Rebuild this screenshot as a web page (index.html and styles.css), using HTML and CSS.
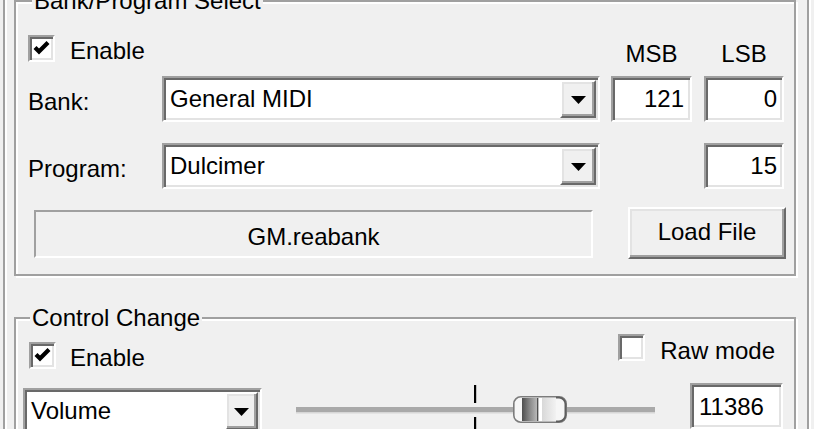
FILE: index.html
```html
<!DOCTYPE html>
<html>
<head>
<meta charset="utf-8">
<title>Bank/Program Select</title>
<link rel="stylesheet" href="styles.css">
</head>
<body>
<div class="frame">
  <section class="group g1">
    <div class="legend">Bank/Program Select</div>
    <div class="row r-enable">
      <span class="check sunken"><svg viewBox="0 0 19 19" width="19" height="19"><polyline points="3,8.5 7,12.5 16,3.5" fill="none" stroke="#000" stroke-width="4.2"/></svg></span>
      <span class="check-label">Enable</span>
      <span class="col-head msb-head">MSB</span>
      <span class="col-head lsb-head">LSB</span>
    </div>
    <div class="row r-field">
      <span class="label">Bank:</span>
      <div class="combo sunken wide"><span class="combo-text">General MIDI</span><span class="drop raised"><svg viewBox="0 0 15 8" width="15" height="8"><polygon points="0,0 15,0 7.5,8" fill="#000"/></svg></span></div>
      <div class="edit sunken num msb-edit">121</div>
      <div class="edit sunken num lsb-edit">0</div>
    </div>
    <div class="row r-field r-program">
      <span class="label">Program:</span>
      <div class="combo sunken wide"><span class="combo-text">Dulcimer</span><span class="drop raised"><svg viewBox="0 0 15 8" width="15" height="8"><polygon points="0,0 15,0 7.5,8" fill="#000"/></svg></span></div>
      <div class="edit sunken num prog-edit">15</div>
    </div>
    <div class="row r-file">
      <div class="static">GM.reabank</div>
      <div class="button raised">Load File</div>
    </div>
  </section>

  <section class="group g2">
    <div class="legend">Control Change</div>
    <div class="row r-cc">
      <span class="check sunken cc-check"><svg viewBox="0 0 19 19" width="19" height="19"><polyline points="3,8.5 7,12.5 16,3.5" fill="none" stroke="#000" stroke-width="4.2"/></svg></span>
      <span class="check-label cc-label">Enable</span>
      <span class="check sunken raw-check"></span>
      <span class="check-label raw-label">Raw mode</span>
    </div>
    <div class="row r-ctrl">
      <div class="combo sunken small"><span class="combo-text">Volume</span><span class="drop raised"><svg viewBox="0 0 15 8" width="15" height="8"><polygon points="0,0 15,0 7.5,8" fill="#000"/></svg></span></div>
      <svg class="slider" viewBox="0 0 370 46" width="370" height="46">
        <defs>
          <linearGradient id="tg" x1="0" x2="1" y1="0" y2="0">
            <stop offset="0" stop-color="#4e4e4e"/>
            <stop offset="0.55" stop-color="#8c8c8c"/>
            <stop offset="1" stop-color="#b8b8b8"/>
          </linearGradient>
          <linearGradient id="tl" x1="0" x2="1" y1="0" y2="0">
            <stop offset="0" stop-color="#d8d8d8"/>
            <stop offset="1" stop-color="#f2f2f2"/>
          </linearGradient>
        </defs>
        <rect x="6" y="24" width="359" height="5" fill="#a9a9a9"/>
        <rect x="6" y="29" width="359" height="1.5" fill="#d6d6d6"/>
        <rect x="184" y="2" width="2.2" height="18" fill="#000"/>
        <rect x="184" y="34" width="2.2" height="14" fill="#000"/>
        <rect x="223.8" y="13.8" width="52.4" height="25.4" rx="7" fill="#f6f6f6" stroke="#7c7c7c" stroke-width="1.6"/>
        <rect x="232" y="15" width="15" height="23" fill="url(#tg)"/>
        <rect x="247" y="15" width="1.6" height="23" fill="#505050"/>
        <rect x="248.6" y="15" width="3.4" height="23" fill="#ffffff"/>
        <rect x="252" y="15" width="14" height="23" fill="url(#tl)"/>
        <path d="M266 14.6 h3 a6.5 6.5 0 0 1 6.4 6.5 v10.8 a6.5 6.5 0 0 1 -6.4 6.5 h-3" fill="none" stroke="#5e5e5e" stroke-width="1.8"/>
      </svg>
      <div class="edit sunken value-edit">11386</div>
    </div>
  </section>
</div>
</body>
</html>
```

FILE: styles.css
```css
* { box-sizing: border-box; }

html, body {
  margin: 0;
  padding: 0;
}

body {
  width: 814px;
  height: 429px;
  overflow: hidden;
  background: #f0f0f0;
  font-family: "Liberation Sans", Arial, sans-serif;
  font-size: 24px;
  line-height: 28px;
  color: #000;
}

.frame {
  margin: 0 5px 0 3px;
  height: 429px;
  border-left: 2px solid #a0a0a0;
  border-right: 2px solid #a0a0a0;
  box-shadow: inset 2px 0 0 #ffffff, 2px 0 0 #ffffff;
  padding: 0 11px 0 9px;
}

/* etched group box */
.group {
  position: relative;
  border: 2px solid #a0a0a0;
  box-shadow: inset 2px 2px 0 #ffffff, 2px 2px 0 #ffffff;
}

.legend {
  position: absolute;
  top: -15px;
  left: 16px;
  padding: 0 2px;
  background: #f0f0f0;
  white-space: nowrap;
}

.g2 .legend { left: 14px; }

.g1 { padding-bottom: 15px; }
.g2 { margin-top: 41px; height: 200px; }

.row {
  display: flex;
  align-items: flex-start;
  white-space: nowrap;
}

/* 3D edges */
.sunken {
  border: 2px solid;
  border-color: #a0a0a0 #ffffff #ffffff #a0a0a0;
  box-shadow: inset 2px 2px 0 #696969, inset -2px -2px 0 #e3e3e3;
  background: #ffffff;
}

.raised {
  border: 2px solid;
  border-color: #ffffff #696969 #696969 #ffffff;
  box-shadow: inset -2px -2px 0 #a0a0a0, inset 2px 2px 0 #e3e3e3;
  background: #f0f0f0;
}

/* checkboxes */
.check {
  flex: none;
  width: 27px;
  height: 27px;
  padding: 2px;
  display: flex;
}

.check svg { display: block; flex: none; }

.check-label { flex: none; }

/* Group 1 */
.r-enable {
  margin-top: 32px;
  height: 42px;
  padding-left: 12px;
}

.r-enable .check { margin-top: 1px; }
.r-enable .check-label { margin-left: 15px; margin-top: 3px; }

.col-head {
  text-align: center;
  margin-top: 6px;
}

.msb-head { margin-left: auto; width: 81px; }
.lsb-head { margin-left: 12px; width: 80px; margin-right: 10px; }

.r-field {
  height: 46px;
  padding-left: 12px;
}

.r-program { margin-top: 21px; }

.label {
  width: 134px;
  flex: none;
  margin-top: 12px;
}

.combo {
  flex: none;
  height: 46px;
  padding: 2px 2px 2px 6px;
  display: flex;
  align-items: center;
}

.combo.wide { width: 438px; }

.combo-text { flex: 1; padding-bottom: 1px; }

.drop {
  flex: none;
  width: 36px;
  height: 38px;
  display: flex;
  align-items: center;
  justify-content: center;
}

.drop svg { display: block; margin-top: 1px; }

.edit {
  flex: none;
  height: 46px;
  padding: 0 6px;
  display: flex;
  align-items: center;
}

.num { justify-content: flex-end; }

.msb-edit { width: 81px; margin-left: 11px; }
.lsb-edit { width: 80px; margin-left: 12px; padding-right: 5px; }
.prog-edit { width: 80px; margin-left: 104px; padding-right: 5px; }

.r-file {
  margin-top: 18px;
  height: 52px;
  padding-left: 18px;
}

.static {
  flex: none;
  width: 559px;
  height: 48px;
  margin-top: 3px;
  border: 2px solid;
  border-color: #a0a0a0 #ffffff #ffffff #a0a0a0;
  display: flex;
  align-items: center;
  justify-content: center;
  padding-top: 5px;
}

.button {
  flex: none;
  width: 158px;
  height: 52px;
  margin-left: 35px;
  display: flex;
  align-items: center;
  justify-content: center;
  padding-bottom: 2px;
}

/* Group 2 */
.r-cc {
  margin-top: 15px;
  height: 49px;
  padding-left: 13px;
}

.cc-check { margin-top: 8px; }
.cc-label { margin-left: 14px; margin-top: 10px; }

.raw-check { margin-left: auto; margin-top: 0; }
.raw-label { margin-left: 15px; margin-top: 3px; margin-right: 19px; }

.r-ctrl {
  padding-left: 7px;
}

.combo.small {
  width: 239px;
  margin-top: 5px;
}

.combo.small .drop { width: 33px; }

.slider {
  flex: none;
  display: block;
  margin-left: 28px;
}

.value-edit {
  width: 93px;
  margin-left: 30px;
  padding-left: 7px;
  padding-top: 1px;
}
```
